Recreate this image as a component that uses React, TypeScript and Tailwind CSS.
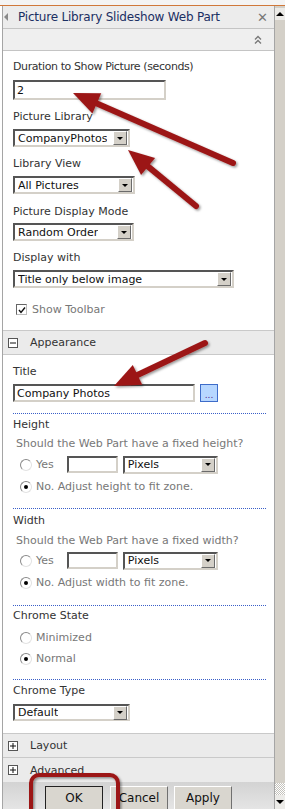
import React from 'react';

type Pt = { x1: number; y1: number; x2: number; y2: number };

function DropBtn() {
    return (
        <span className="ml-auto mr-px flex h-[14px] w-[14px] shrink-0 items-center justify-center border border-t-white border-l-white border-b-[#6b6b6b] border-r-[#6b6b6b] bg-[#d4d0c8]">
            <span className="h-0 w-0 border-x-[3px] border-t-[3px] border-x-transparent border-t-black" />
        </span>
    );
}

function Select({ value, className }: { value: string; className: string }) {
    return (
        <div className={`flex items-center border-2 border-t-[#555] border-l-[#555] border-b-[#d4d0c8] border-r-[#d4d0c8] bg-white pl-[3px] text-[#111] ${className}`}>
            <span className="truncate">{value}</span>
            <DropBtn />
        </div>
    );
}

function TextBox({ value, className }: { value?: string; className: string }) {
    return (
        <div className={`flex items-center border-2 border-t-[#555] border-l-[#555] border-b-[#d4d0c8] border-r-[#d4d0c8] bg-white pl-[2px] text-[#111] ${className}`}>
            {value}
        </div>
    );
}

function Radio({ checked }: { checked?: boolean }) {
    return (
        <span className="flex h-[12px] w-[12px] shrink-0 items-center justify-center rounded-full border border-t-[#8a8a8a] border-l-[#8a8a8a] border-b-[#e2e2e2] border-r-[#e2e2e2] bg-white">
            {checked && <span className="h-[4px] w-[4px] rounded-full bg-black" />}
        </span>
    );
}

function Dotted() {
    return <div className="mr-[8px] border-t border-dotted border-[#3a5fc8]" />;
}

function SectionHead({ label, open, className }: { label: string; open?: boolean; className: string }) {
    return (
        <div className={`flex items-center bg-[#ebebeb] pl-[5px] text-[#333] ${className}`}>
            <span className="flex h-[10px] w-[10px] items-center justify-center border border-[#555] bg-white">
                <svg width="6" height="6" viewBox="0 0 6 6">
                    <path d="M0 3H6" stroke="#111" strokeWidth="1" />
                    {!open && <path d="M3 0V6" stroke="#111" strokeWidth="1" />}
                </svg>
            </span>
            <span className="ml-[12px]">{label}</span>
        </div>
    );
}

// red callout arrow, head drawn at (x2, y2)
function Arrow({ x1, y1, x2, y2 }: Pt) {
    const dx = x2 - x1;
    const dy = y2 - y1;
    const len = Math.hypot(dx, dy);
    const ux = dx / len;
    const uy = dy / len;
    const hl = 26;
    const hw = 11;
    const bx = x2 - ux * hl;
    const by = y2 - uy * hl;
    const px = -uy;
    const py = ux;
    const pts = `${x2},${y2} ${bx + px * hw},${by + py * hw} ${bx - px * hw},${by - py * hw}`;
    return (
        <g filter="url(#shadow)">
            <line x1={x1} y1={y1} x2={bx + ux * 3} y2={by + uy * 3} stroke="#9c1919" strokeWidth="6" strokeLinecap="round" />
            <polygon points={pts} fill="#9c1919" />
        </g>
    );
}

function Scrollbar() {
    return (
        <div className="flex w-[10px] flex-col bg-[#d4d0c8]">
            <div className="mt-[2px] flex h-[12px] items-center justify-center bg-[#ecebe8]">
                <span className="h-0 w-0 border-x-[4px] border-b-[4px] border-x-transparent border-b-black" />
            </div>
            <div className="flex-1" />
            <div className="h-[12px] bg-[repeating-conic-gradient(#ffffff_0%_25%,#c4c2bc_0%_50%)] bg-[length:2px_2px]" />
            <div className="flex h-[14px] items-center justify-center bg-[#ecebe8]">
                <span className="h-0 w-0 border-x-[4px] border-t-[4px] border-x-transparent border-t-black" />
            </div>
        </div>
    );
}

export default function App() {
    return (
        <div className="relative h-[809px] w-[285px] overflow-hidden bg-white font-['DejaVu_Sans',sans-serif] text-[11px] leading-[15px] text-[#333]">
            <div className="h-[5px] bg-[#f4f4f4]" />
            <div className="h-px bg-[#d0783a]" />
            <div className="flex h-[803px]">
                <div className="w-[2px] bg-white" />
                <div className="flex w-[273px] flex-col border-x border-[#a5a5a5]">
                    {/* title bar */}
                    <div className="flex h-[23px] shrink-0 items-center border-b border-[#c4c4c4] bg-[#ececec]">
                        <span className="ml-[1px] h-0 w-0 border-y-[4px] border-r-[4px] border-y-transparent border-r-[#8a8a8a]" />
                        <span className="ml-[10px] text-[12px] tracking-[-0.2px] text-[#1b2f63]">Picture Library Slideshow Web Part</span>
                        <span className="ml-auto mr-[6px] text-[13px] font-bold text-[#777]">✕</span>
                    </div>
                    <div className="flex h-[22px] shrink-0 items-center justify-end border-b border-[#c4c4c4] bg-[#efefef] pr-[12px]">
                        <svg width="8" height="10" viewBox="0 0 8 10">
                            <path d="M1 4.5L4 1.5L7 4.5M1 8.5L4 5.5L7 8.5" fill="none" stroke="#777" strokeWidth="1.3" />
                        </svg>
                    </div>

                    {/* settings */}
                    <div className="flex shrink-0 flex-col pb-[13px] pl-[10px]">
                        <div className="mt-[8px] tracking-[-0.4px]">Duration to Show Picture (seconds)</div>
                        <TextBox value="2" className="mt-[6px] h-[20px] w-[153px]" />
                        <div className="mt-[9px]">Picture Library</div>
                        <Select value="CompanyPhotos" className="mt-[5px] h-[18px] w-[117px]" />
                        <div className="mt-[9px]">Library View</div>
                        <Select value="All Pictures" className="mt-[5px] h-[18px] w-[122px]" />
                        <div className="mt-[10px]">Picture Display Mode</div>
                        <Select value="Random Order" className="mt-[4px] h-[18px] w-[121px]" />
                        <div className="mt-[9px]">Display with</div>
                        <Select value="Title only below image" className="mt-[5px] h-[18px] w-[221px]" />
                        <div className="mt-[14px] flex h-[15px] items-center pl-[3px] text-[#777]">
                            <span className="flex h-[11px] w-[11px] items-center justify-center border border-t-[#666] border-l-[#666] border-b-[#bbb] border-r-[#bbb] bg-white">
                                <svg width="8" height="8" viewBox="0 0 8 8">
                                    <path d="M1 4L3 6.5L7 1.5" fill="none" stroke="#111" strokeWidth="1.4" />
                                </svg>
                            </span>
                            <span className="ml-[5px]">Show Toolbar</span>
                        </div>
                    </div>

                    <SectionHead label="Appearance" open className="h-[25px] shrink-0 border-y border-[#c9c9c9]" />

                    <div className="flex shrink-0 flex-col pb-[12px] pl-[10px]">
                        <div className="mt-[9px]">Title</div>
                        <div className="mt-[5px] flex items-center">
                            <TextBox value="Company Photos" className="h-[18px] w-[182px]" />
                            <div className="ml-[5px] flex h-[18px] w-[18px] items-end justify-center border border-[#3e6cc9] bg-[#b7d7ff] pb-[1px] text-[9px] leading-[9px] text-[#552288]">...</div>
                        </div>
                        <div className="mt-[11px]"><Dotted /></div>
                        <div className="mt-[3px]">Height</div>
                        <div className="mt-[4px] pl-[3px] text-[#777]">Should the Web Part have a fixed height?</div>
                        <div className="mt-[5px] flex h-[17px] items-center text-[#777]">
                            <span className="ml-[7px]"><Radio /></span>
                            <span className="ml-[4px]">Yes</span>
                            <TextBox className="ml-[13px] h-[17px] w-[51px]" />
                            <Select value="Pixels" className="ml-[5px] h-[18px] w-[95px]" />
                        </div>
                        <div className="mt-[6px] flex h-[15px] items-center text-[#777]">
                            <span className="ml-[7px]"><Radio checked /></span>
                            <span className="ml-[4px]">No. Adjust height to fit zone.</span>
                        </div>
                        <div className="mt-[14px]"><Dotted /></div>
                        <div className="mt-[4px]">Width</div>
                        <div className="mt-[5px] pl-[3px] text-[#777]">Should the Web Part have a fixed width?</div>
                        <div className="mt-[4px] flex h-[17px] items-center text-[#777]">
                            <span className="ml-[7px]"><Radio /></span>
                            <span className="ml-[4px]">Yes</span>
                            <TextBox className="ml-[13px] h-[17px] w-[51px]" />
                            <Select value="Pixels" className="ml-[5px] h-[18px] w-[95px]" />
                        </div>
                        <div className="mt-[6px] flex h-[15px] items-center text-[#777]">
                            <span className="ml-[7px]"><Radio checked /></span>
                            <span className="ml-[4px]">No. Adjust width to fit zone.</span>
                        </div>
                        <div className="mt-[15px]"><Dotted /></div>
                        <div className="mt-[2px]">Chrome State</div>
                        <div className="mt-[7px] flex h-[15px] items-center text-[#777]">
                            <span className="ml-[7px]"><Radio /></span>
                            <span className="ml-[4px]">Minimized</span>
                        </div>
                        <div className="mt-[6px] flex h-[15px] items-center text-[#777]">
                            <span className="ml-[7px]"><Radio checked /></span>
                            <span className="ml-[4px]">Normal</span>
                        </div>
                        <div className="mt-[13px]"><Dotted /></div>
                        <div className="mt-[3px]">Chrome Type</div>
                        <Select value="Default" className="mt-[6px] h-[17px] w-[117px]" />
                    </div>

                    <SectionHead label="Layout" className="h-[25px] shrink-0 border-y border-[#c9c9c9]" />
                    <SectionHead label="Advanced" className="h-[24px] shrink-0" />

                    {/* buttons */}
                    <div className="flex flex-1 items-start bg-gradient-to-b from-[#d3d3d3] to-[#e6e6e6] pt-[4px] text-[12px]">
                        <button className="ml-[42px] h-[25px] w-[58px] border border-[#222] bg-[#d9d6cf] text-[#111]">OK</button>
                        <button className="ml-[7px] h-[25px] w-[58px] border border-t-white border-l-white border-b-[#707070] border-r-[#707070] bg-[#d9d6cf] text-[#111]">Cancel</button>
                        <button className="ml-[6px] h-[25px] w-[58px] border border-t-white border-l-white border-b-[#707070] border-r-[#707070] bg-[#d9d6cf] text-[#111]">Apply</button>
                    </div>
                </div>
                <Scrollbar />
            </div>

            {/* callouts */}
            <svg className="pointer-events-none absolute left-0 top-0" width="285" height="809" viewBox="0 0 285 809">
                <defs>
                    <filter id="shadow" x="-20%" y="-20%" width="140%" height="140%">
                        <feDropShadow dx="1.5" dy="1.5" stdDeviation="1.2" floodColor="#000" floodOpacity="0.4" />
                    </filter>
                </defs>
                <Arrow x1={233} y1={163} x2={73} y2={93} />
                <Arrow x1={196} y1={206} x2={128} y2={150} />
                <Arrow x1={205} y1={343} x2={114} y2={386} />
                <rect x="31" y="775" width="87" height="44" rx="8" fill="none" stroke="#9c1919" strokeWidth="4" filter="url(#shadow)" />
            </svg>
        </div>
    );
}
